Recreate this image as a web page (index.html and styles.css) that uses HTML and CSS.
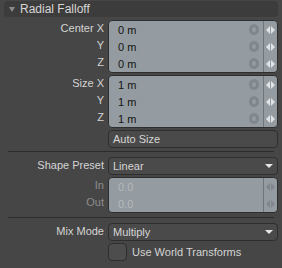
FILE: index.html
```html
<!DOCTYPE html>
<html lang="en">

<head>
    <meta charset="UTF-8">
    <meta name="viewport" content="width=device-width, initial-scale=1.0">
    <title>Radial Falloff</title>
    <link rel="stylesheet" href="styles.css">
</head>

<body>
    <div class="panel">
        <!-- Header -->
        <div class="header">
            <span class="caret"></span>
            <span class="title">Radial Falloff</span>
        </div>

        <!-- Center -->
        <div class="row">
            <div class="labels">
                <div>Center X</div>
                <div>Y</div>
                <div>Z</div>
            </div>
            <div class="vec">
                <div class="vrow"><span class="val">0 m</span><span class="key"></span><span class="spin"><i class="l"></i><i class="r"></i></span></div>
                <div class="vrow"><span class="val">0 m</span><span class="key"></span><span class="spin"><i class="l"></i><i class="r"></i></span></div>
                <div class="vrow"><span class="val">0 m</span><span class="key"></span><span class="spin"><i class="l"></i><i class="r"></i></span></div>
            </div>
        </div>

        <!-- Size -->
        <div class="row">
            <div class="labels">
                <div>Size X</div>
                <div>Y</div>
                <div>Z</div>
            </div>
            <div class="vec">
                <div class="vrow"><span class="val">1 m</span><span class="key"></span><span class="spin"><i class="l"></i><i class="r"></i></span></div>
                <div class="vrow"><span class="val">1 m</span><span class="key"></span><span class="spin"><i class="l"></i><i class="r"></i></span></div>
                <div class="vrow"><span class="val">1 m</span><span class="key"></span><span class="spin"><i class="l"></i><i class="r"></i></span></div>
            </div>
        </div>

        <div class="row">
            <div class="labels"></div>
            <div class="button">Auto Size</div>
        </div>

        <div class="sep"></div>

        <div class="row">
            <div class="labels"><div>Shape Preset</div></div>
            <div class="select">Linear<span class="arrow"></span></div>
        </div>

        <div class="row">
            <div class="labels off">
                <div>In</div>
                <div>Out</div>
            </div>
            <div class="vec off">
                <div class="vrow"><span class="val">0.0</span><span class="spin"><i class="l"></i><i class="r"></i></span></div>
                <div class="vrow"><span class="val">0.0</span><span class="spin"><i class="l"></i><i class="r"></i></span></div>
            </div>
        </div>

        <div class="sep sep2"></div>

        <div class="row">
            <div class="labels"><div>Mix Mode</div></div>
            <div class="select">Multiply<span class="arrow"></span></div>
        </div>

        <div class="row">
            <div class="labels"></div>
            <label class="check"><span class="box"></span>Use World Transforms</label>
        </div>
    </div>
</body>

</html>
```

FILE: styles.css
```css
body {
    margin: 0;
    background: #464646;
    font-family: "Liberation Sans", Arial, sans-serif;
    font-size: 11px;
    color: #d4d4d4;
}

.panel {
    padding: 1px 4px 0 4px;
}

.header {
    height: 16px;
    background: #3c3c3c;
    border-radius: 4px;
    display: flex;
    align-items: center;
    margin-bottom: 3px;
}

.caret {
    width: 0;
    height: 0;
    margin-left: 5px;
    margin-right: 5px;
    border-left: 3px solid transparent;
    border-right: 3px solid transparent;
    border-top: 5px solid #8a8a8a;
}

.title {
    font-size: 12px;
    color: #d6d6d6;
}

.row {
    display: flex;
    margin-bottom: 2px;
}

.labels {
    width: 100px;
    flex: none;
    padding-right: 4px;
    text-align: right;
}

.labels div {
    height: 17px;
    line-height: 17px;
}

.labels.off {
    color: #8c8c8c;
}

.vec {
    flex: 1;
    background: #949ba1;
    border: 1px solid #2e2e2e;
    border-radius: 4px;
    overflow: hidden;
}

.vrow {
    display: flex;
    height: 17px;
    align-items: center;
}

.val {
    flex: 1;
    padding-left: 9px;
    color: #151515;
}

.vec.off .val {
    color: #b4b9bd;
}

.key {
    width: 4px;
    height: 5px;
    border: 3px solid #80878c;
    border-radius: 50%;
    margin-right: 4px;
}

.spin {
    width: 13px;
    height: 17px;
    border-left: 1px solid #6f767b;
    display: flex;
    align-items: center;
    justify-content: center;
}

.spin i {
    width: 0;
    height: 0;
    border-top: 4px solid transparent;
    border-bottom: 4px solid transparent;
}

.spin .l {
    border-right: 4px solid #e0e4e6;
    margin-right: 1px;
}

.spin .r {
    border-left: 4px solid #e0e4e6;
}

.vec.off .spin .l {
    border-right-color: #80868b;
}

.vec.off .spin .r {
    border-left-color: #80868b;
}

.button,
.select {
    flex: 1;
    height: 16px;
    line-height: 16px;
    border: 1px solid #2e2e2e;
    border-radius: 4px;
    background: #4a4a4a;
    padding-left: 4px;
    color: #d6d6d6;
}

.select {
    display: flex;
    align-items: center;
    justify-content: space-between;
}

.arrow {
    width: 0;
    height: 0;
    margin-right: 4px;
    border-left: 4px solid transparent;
    border-right: 4px solid transparent;
    border-top: 4px solid #e6e6e6;
}

.sep {
    height: 1px;
    background: #2c2c2c;
    margin: 3px 4px 5px 4px;
}

.sep2 {
    margin-top: 4px;
}

.check {
    display: flex;
    align-items: center;
    gap: 5px;
}

.box {
    width: 17px;
    height: 16px;
    border: 1px solid #2e2e2e;
    border-radius: 4px;
    background: #4d4d4d;
}
```
